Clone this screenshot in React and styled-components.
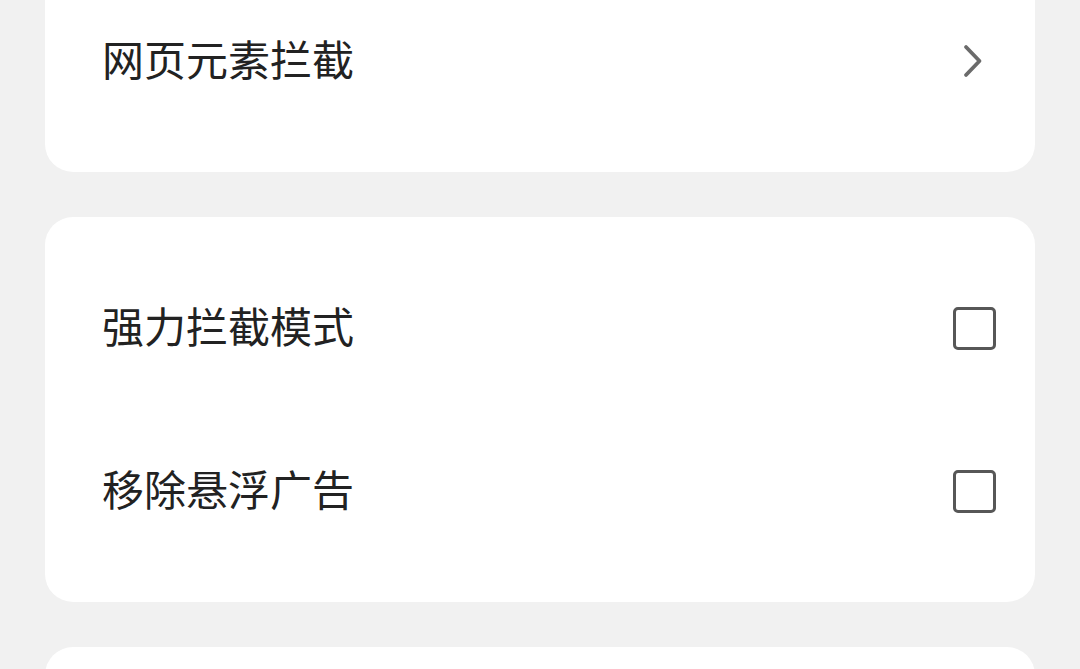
import React from "react";
import styled, { createGlobalStyle } from "styled-components";

const GlobalStyle = createGlobalStyle`
  html, body {
    margin: 0;
    padding: 0;
    background: #f1f1f1;
    overflow: hidden;
  }
  body {
    font-family: "Noto Sans CJK SC", "Noto Sans", sans-serif;
  }
`;

const settings = [
  { items: [{ label: "网页元素拦截", type: "link" }] },
  {
    items: [
      { label: "强力拦截模式", type: "check" },
      { label: "移除悬浮广告", type: "check" },
    ],
  },
  { items: [{ label: "", type: "none" }] },
];

function Chevron() {
  return (
    <svg width="24" height="40" viewBox="0 0 24 40">
      <polyline
        points="6,5 19.5,19 6,33"
        fill="none"
        stroke="#6b6b6b"
        strokeWidth="3.8"
        strokeLinecap="round"
        strokeLinejoin="round"
      />
    </svg>
  );
}

function App() {
  return (
    <>
      <GlobalStyle />
      <Page>
        {settings.map((group, gi) => (
          <Card key={gi}>
            {group.items.map((item, ii) => (
              <Row key={ii}>
                <Label>{item.label}</Label>
                {item.type === "link" && (
                  <ChevronWrap>
                    <Chevron />
                  </ChevronWrap>
                )}
                {item.type === "check" && <CheckBox />}
              </Row>
            ))}
          </Card>
        ))}
      </Page>
    </>
  );
}

const Page = styled.div`
  display: flex;
  flex-direction: column;
  gap: 45px;
  padding: 0 45px;
  margin-top: -50px;
`;

const Card = styled.div`
  background: #ffffff;
  border-radius: 28px;
  padding: 30px 39px 29px 57px;
`;

const Row = styled.div`
  height: 163px;
  display: flex;
  align-items: center;
  justify-content: space-between;
`;

const Label = styled.span`
  font-size: 42px;
  color: #222222;
  line-height: 1;
  margin-bottom: 7px;
`;

const ChevronWrap = styled.div`
  display: flex;
  align-items: center;
  margin-right: 12px;
`;

const CheckBox = styled.div`
  width: 43px;
  height: 43px;
  box-sizing: border-box;
  border: 3px solid #575757;
  border-radius: 5px;
  background: #ffffff;
`;

export default App;
